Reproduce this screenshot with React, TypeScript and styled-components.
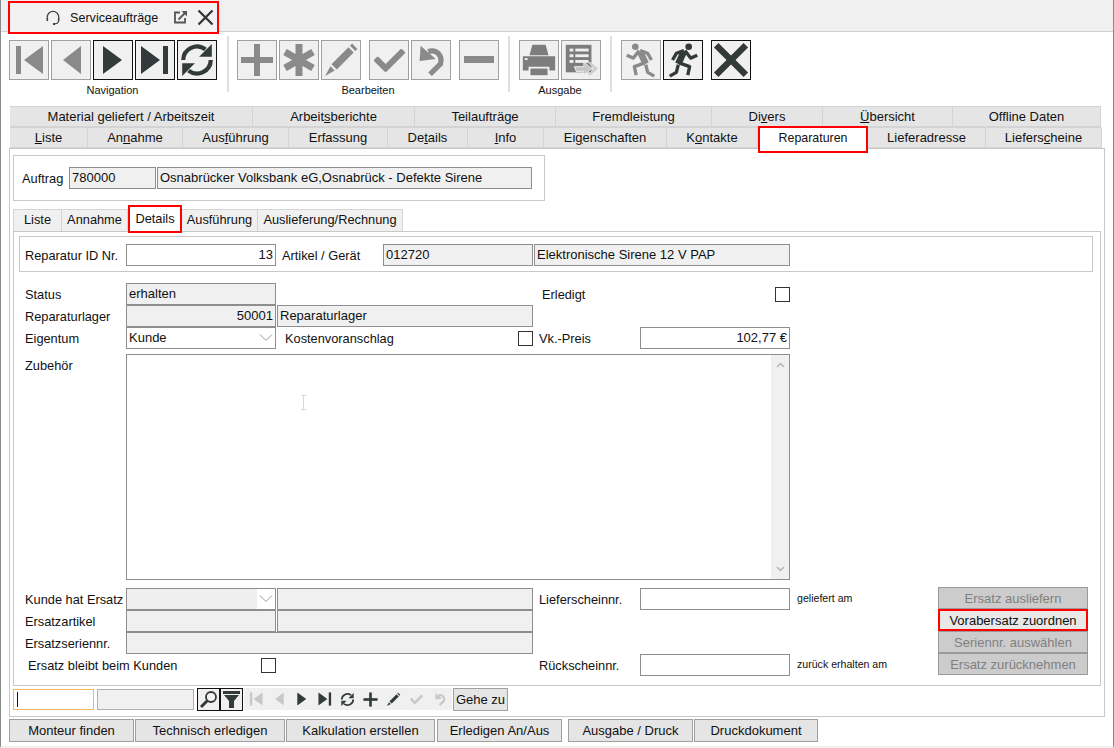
import { FC, ReactNode } from "react";
import styled, { createGlobalStyle } from "styled-components";
import { FaCheck } from "react-icons/fa";

const Global = createGlobalStyle`
  html, body { margin: 0; padding: 0; background: #fff; }
  body { font-family: "Liberation Sans", Arial, sans-serif; font-size: 13px; color: #111; }
  * { box-sizing: border-box; }
`;

const Page = styled.div`
  width: 1114px;
  height: 748px;
  overflow: hidden;
  background: #fff;
  display: flex;
  flex-direction: column;
  border-left: 1px solid #8a8a8a;
  border-right: 1px solid #8a8a8a;
  border-bottom: 2px solid #f0f0f0;
`;

const TitleBar = styled.div`
  height: 32px;
  flex: none;
  margin: 0 -1px;
  background: #f0f0f0;
  border-bottom: 1px solid #cfcfcf;
  padding: 1px 0 0 8px;
`;

const TitleTab = styled.div`
  width: 211px;
  height: 33px;
  border: 2px solid #f00;
  background: #f2f2f2;
  display: flex;
  align-items: center;
  padding-left: 35px;
  position: relative;
  z-index: 2;
`;

const TitleText = styled.span`
  margin-left: 9px;
  width: 103px;
  flex: none;
  font-size: 12.6px;
  white-space: nowrap;
`;

const TitleAction = styled.span`
  display: inline-flex;
  flex: none;
  margin-right: 9px;
  color: #333;
  &:last-child { margin-right: 0; }
`;

const Toolbar = styled.div`
  display: flex;
  height: 74px;
  flex: none;
  padding: 4px 0 0 8px;
`;

const ToolGroup = styled.div<{ $width: number; $pad?: number }>`
  width: ${p => p.$width}px;
  height: 56px;
  display: flex;
  flex-direction: column;
  padding: 4px 0 0 ${p => p.$pad || 0}px;
  align-items: flex-start;
  & + & {
    border-left: 2px solid #e0e0e0;
  }
`;

const ToolRow = styled.div`
  display: flex;
  height: 40px;
`;

const ToolCaption = styled.div<{ $width: number }>`
  width: ${p => p.$width}px;
  text-align: center;
  font-size: 11px;
  line-height: 12px;
  margin-top: 4px;
  white-space: nowrap;
`;

const ToolButton = styled.button<{ $active?: boolean; $gap?: number }>`
  width: 40px;
  height: 40px;
  padding: 0;
  margin: 0 2px 0 ${p => p.$gap || 0}px;
  background: #f0f0f0;
  border: 1px solid ${p => (p.$active ? "#111" : "#a0a0a0")};
  color: ${p => (p.$active ? "#333a3a" : "#8a8a8a")};
  display: flex;
  align-items: center;
  justify-content: center;
`;

const TabRow = styled.div`
  display: flex;
  height: 21px;
  margin-left: 9px;
  flex: none;
  position: relative;
`;

const Tab = styled.div<{ $width: number; $active?: boolean }>`
  width: ${p => p.$width}px;
  flex: none;
  background: #e5e5e5;
  border: 1px solid #d4d4d4;
  border-left-width: 0;
  line-height: 19px;
  text-align: center;
  white-space: nowrap;
  ${p => p.$active && `
    background: #fff;
    border: 2px solid #f00;
    height: 27px;
    margin: -1px 0 -5px;
    position: relative;
    z-index: 3;
    font-size: 12.4px;
    line-height: 20px;
  `}
  u { text-decoration-thickness: 1px; text-underline-offset: 1px; }
`;

const MainPanel = styled.div`
  margin-left: 8px;
  width: 1096px;
  height: 569px;
  flex: none;
  border: 1px solid #c8c8c8;
  padding: 6px 3px 0 3px;
`;

const GroupBox = styled.div`
  width: 532px;
  height: 46px;
  border: 1px solid #c8c8c8;
  display: flex;
  align-items: center;
  padding-left: 8px;
`;

const Label = styled.label<{ $width?: number; $indent?: number }>`
  width: ${p => (p.$width ? `${p.$width}px` : "auto")};
  margin-left: ${p => p.$indent || 0}px;
  padding-top: 1px;
  flex: none;
  font-size: 12.8px;
  white-space: nowrap;
`;

const Field = styled.div<{ $width: number; $disabled?: boolean; $right?: boolean }>`
  width: ${p => p.$width}px;
  height: 22px;
  flex: none;
  border: 1px solid #8e8e8e;
  background: ${p => (p.$disabled ? "#f0f0f0" : "#fff")};
  line-height: 19px;
  padding: 0 2px;
  text-align: ${p => (p.$right ? "right" : "left")};
  white-space: nowrap;
  overflow: hidden;
`;

const SubTabs = styled.div`
  display: flex;
  height: 22px;
  margin-top: 8px;
  position: relative;
`;

const SubTab = styled.div<{ $width: number; $active?: boolean }>`
  width: ${p => p.$width}px;
  flex: none;
  background: #f0f0f0;
  border: 1px solid #d4d4d4;
  border-left-width: 0;
  border-bottom: none;
  font-size: 12.8px;
  line-height: 20px;
  text-align: center;
  white-space: nowrap;
  &:first-child { border-left-width: 1px; }
  ${p => p.$active && `
    background: #fff;
    border: 2px solid #f00;
    height: 28px;
    margin: -4px 0 -2px;
    line-height: 24px;
    position: relative;
    z-index: 2;
  `}
`;

const SubPanel = styled.div`
  height: 455px;
  width: 1088px;
  border: 1px solid #c8c8c8;
  padding: 4px 7px 0 5px;
`;

const IdBox = styled.div`
  height: 36px;
  border: 1px solid #c8c8c8;
  display: flex;
  align-items: center;
  padding-left: 5px;
  padding-top: 1px;
`;

const Row = styled.div<{ $top?: number }>`
  display: flex;
  align-items: center;
  height: 22px;
  margin-top: ${p => p.$top || 0}px;
  padding-left: 6px;
`;

const Gap = styled.div<{ $width: number }>`
  width: ${p => p.$width}px;
  flex: none;
`;

const Check = styled.span`
  width: 15px;
  height: 15px;
  flex: none;
  border: 1px solid #333;
  background: #fff;
`;

const Select = styled(Field)`
  position: relative;
`;

const Chevron = styled.svg`
  position: absolute;
  right: 2px;
  top: 5px;
`;

const SelectFace = styled.span<{ $width: number }>`
  position: absolute;
  left: 0;
  top: 0;
  height: 20px;
  width: ${p => p.$width}px;
  background: #efefef;
`;

const TextArea = styled.div`
  width: 664px;
  height: 226px;
  flex: none;
  border: 1px solid #8e8e8e;
  background: #fff;
  position: relative;
`;

const ScrollBar = styled.div`
  position: absolute;
  right: 0;
  top: 0;
  bottom: 0;
  width: 18px;
  background: #f0f0f0;
  display: flex;
  flex-direction: column;
  justify-content: space-between;
  align-items: center;
  padding: 7px 0;
`;

const MouseCursor = styled.svg`
  position: absolute;
  left: 173px;
  top: 40px;
`;

const ZubehoerRow = styled.div`
  display: flex;
  margin-top: 5px;
  padding-left: 6px;
`;

const ZubehoerLabel = styled.label`
  width: 101px;
  padding-top: 4px;
  font-size: 12.8px;
  flex: none;
`;

const LowerArea = styled.div`
  display: flex;
  margin-top: 8px;
`;

const LowerFields = styled.div`
  width: 919px;
  flex: none;
`;

const Note = styled.span`
  font-size: 10.6px;
  margin-left: 7px;
  margin-top: -3px;
  white-space: nowrap;
`;

const ActionStack = styled.div`
  display: flex;
  flex-direction: column;
  margin-top: -1px;
`;

const ActionButton = styled.button<{ $highlight?: boolean }>`
  width: 150px;
  height: 22px;
  padding: 0;
  font-family: inherit;
  font-size: 13px;
  background: ${p => (p.$highlight ? "#e8e8e8" : "#cccccc")};
  border: ${p => (p.$highlight ? "2px solid #f00" : "1px solid #9a9a9a")};
  color: ${p => (p.$highlight ? "#111" : "#808080")};
`;

const SearchBar = styled.div`
  display: flex;
  align-items: center;
  height: 24px;
  margin-top: 1px;
`;

const SearchInput = styled.div<{ $focus?: boolean; $width: number }>`
  width: ${p => p.$width}px;
  height: 21px;
  flex: none;
  margin-right: 3px;
  background: ${p => (p.$focus ? "#fff" : "#f0f0f0")};
  border: 1px solid ${p => (p.$focus ? "#f5b85a" : "#b0b0b0")};
  padding: 2px 0 0 3px;
`;

const Caret = styled.div`
  width: 1px;
  height: 15px;
  background: #111;
`;

const SearchButton = styled.button`
  width: 23px;
  height: 23px;
  padding: 0;
  background: #f0f0f0;
  border: 1px solid #111;
  color: #333a3a;
  display: flex;
  align-items: center;
  justify-content: center;
`;

const MiniNav = styled.div`
  display: flex;
  align-items: center;
  width: 208px;
  height: 22px;
  margin-left: 1px;
  background: #f0f0f0;
`;

const MiniIcon = styled.span<{ $on?: boolean }>`
  width: 23px;
  display: flex;
  justify-content: center;
  color: ${p => (p.$on ? "#333a3a" : "#c8c8c8")};
`;

const GoButton = styled.button`
  width: 55px;
  height: 23px;
  padding: 0;
  margin-left: 1px;
  font-family: inherit;
  font-size: 13px;
  background: #e5e5e5;
  border: 1px solid #a0a0a0;
  color: #111;
`;

const BottomBar = styled.div`
  display: flex;
  margin: 2px 0 0 8px;
`;

const BottomButton = styled.button<{ $width: number; $gap?: number }>`
  width: ${p => p.$width}px;
  height: 23px;
  padding: 0;
  margin-left: ${p => p.$gap ?? 1}px;
  font-family: inherit;
  font-size: 13px;
  background: #e5e5e5;
  border: 1px solid #a0a0a0;
  color: #111;
  &:first-child { margin-left: 0; }
`;

const Headset: FC = () => (
  <svg width="16" height="16" viewBox="0 0 16 16" fill="none" stroke="#444" strokeWidth="1.2">
    <path d="M2.300 9V7a5.700 5.700 0 0 1 11.400 0v2" />
    <rect x="1.500" y="8" width="1.600" height="3" fill="#444" stroke="none" />
    <rect x="12.900" y="8" width="1.600" height="3" fill="#444" stroke="none" />
    <path d="M13.500 11c0 1.600-1.400 2.600-3.500 2.800" />
    <path d="M8 14h2" strokeWidth="2" />
  </svg>
);

const ExternalIcon: FC = () => (
  <svg width="15" height="15" viewBox="0 0 15 15" fill="none" stroke="#555" strokeWidth="1.8">
    <path d="M7 2.500H2v10h10V8" />
    <path d="M5.500 9.500 12 3" />
    <polygon points="8.500,1 14,1 14,6.500" fill="#555" stroke="none" />
  </svg>
);

const CrossIcon: FC<{ size: number; weight: number }> = ({ size, weight }) => (
  <svg width={size} height={size} viewBox="0 0 34 34" fill="none" stroke="currentColor" strokeWidth={weight}>
    <path d="M3 3 31 31M31 3 3 31" />
  </svg>
);

const NavIcon: FC<{ kind: "first" | "prev" | "next" | "last"; size?: number }> = ({ kind, size = 34 }) => (
  <svg width={size} height={size} viewBox="0 0 34 34" fill="currentColor">
    {kind === "first" && <><rect x="4" y="3" width="5" height="28" /><polygon points="31,3 31,31 12,17" /></>}
    {kind === "prev" && <polygon points="27,3 27,31 9,17" />}
    {kind === "next" && <polygon points="7,3 7,31 26,17" />}
    {kind === "last" && <><polygon points="3,3 3,31 22,17" /><rect x="25" y="3" width="5" height="28" /></>}
  </svg>
);

const RefreshIcon: FC<{ size?: number }> = ({ size = 36 }) => (
  <svg width={size} height={size} viewBox="0 0 34 34" fill="none" stroke="currentColor" strokeWidth="4">
    <path d="M4 17A13 13 0 0 1 25 7" />
    <path d="M30 17A13 13 0 0 1 9 27" />
    <polygon points="31,2 31,14 19,14" fill="currentColor" stroke="none" />
    <polygon points="3,32 3,20 15,20" fill="currentColor" stroke="none" />
  </svg>
);

const PlusIcon: FC<{ size?: number }> = ({ size = 34 }) => (
  <svg width={size} height={size} viewBox="0 0 34 34" fill="currentColor">
    <rect x="14" y="1" width="6" height="32" />
    <rect x="1" y="14" width="32" height="6" />
  </svg>
);

const MinusIcon: FC = () => (
  <svg width="34" height="34" viewBox="0 0 34 34" fill="currentColor">
    <rect x="2" y="13" width="30" height="7" />
  </svg>
);

const StarIcon: FC = () => (
  <svg width="34" height="34" viewBox="0 0 34 34" fill="none" stroke="currentColor" strokeWidth="7">
    <path d="M17 1V33M3 9 31 25M31 9 3 25" />
  </svg>
);

const PencilIcon: FC<{ size?: number }> = ({ size = 36 }) => (
  <svg width={size} height={size} viewBox="0 0 34 34" fill="currentColor">
    <polygon points="8,21 24,5 29,10 13,26" />
    <polygon points="25.500,3.500 27.500,1.500 32.500,6.500 30.500,8.500" />
    <polygon points="7,23 11,27 2,32" />
  </svg>
);

const UndoIcon: FC<{ size?: number }> = ({ size = 38 }) => (
  <svg width={size} height={size} viewBox="0 0 40 40" fill="none" stroke="currentColor">
    <path d="M17 11C27 8 32 16 30 24L19 35" strokeWidth="5.500" />
    <polygon points="9,5 25,19 8,21" fill="currentColor" stroke="none" />
  </svg>
);

const PrinterIcon: FC = () => (
  <svg width="38" height="38" viewBox="0 0 40 40" fill="#7d7d7d">
    <polygon points="13,4 27,4 30,15 10,15" />
    <path d="M3 16H37V31H31V27H9V31H3Z" />
    <rect x="5" y="18" width="3" height="2" fill="#f0f0f0" />
    <rect x="11" y="29" width="18" height="7" />
  </svg>
);

const ListSendIcon: FC = () => (
  <svg width="38" height="38" viewBox="0 0 40 40">
    <rect x="4" y="4" width="27" height="29" fill="#7d7d7d" />
    <g fill="#f0f0f0">
      <rect x="8" y="8" width="4" height="3" /><rect x="14" y="8" width="14" height="3" />
      <rect x="8" y="14" width="4" height="3" /><rect x="14" y="14" width="14" height="3" />
      <rect x="8" y="20" width="4" height="3" /><rect x="14" y="20" width="14" height="3" />
    </g>
    <polygon points="13,27 23,27 23,22 31,29 23,36 23,32 15,32" fill="#c4c4c4" stroke="#f0f0f0" />
    <polygon points="27,22 30,22 38,29 30,36 27,36 33,29" fill="#cfcfcf" />
  </svg>
);

const RunnerIcon: FC<{ flip?: boolean }> = ({ flip }) => (
  <svg width="38" height="38" viewBox="0 0 40 40" fill="none" stroke="currentColor" strokeWidth="3.500" strokeLinejoin="round">
    <g transform={flip ? "translate(40 0) scale(-1 1)" : undefined}>
      <circle cx="26" cy="6" r="3.500" fill="currentColor" stroke="none" />
      <path d="M21 11 15 24" strokeWidth="7" />
      <path d="M22 10 28 18 35 15" />
      <path d="M21 10 13 13 9 20" />
      <path d="M16 23 27 27 25 36" />
      <path d="M15 25 13 33 6 37" />
    </g>
  </svg>
);

const SearchGlass: FC = () => (
  <svg width="19" height="19" viewBox="0 0 19 19" fill="none" stroke="currentColor">
    <circle cx="12" cy="7" r="5" strokeWidth="1.800" />
    <path d="M8.500 10.500 2 17" strokeWidth="3" />
  </svg>
);

const FunnelIcon: FC = () => (
  <svg width="19" height="19" viewBox="0 0 19 19" fill="currentColor">
    <rect x="1" y="1" width="17" height="3" />
    <polygon points="2,5 17,5 12,11 12,18 7,18 7,11" />
  </svg>
);

const Chev: FC = () => (
  <Chevron width="14" height="9" viewBox="0 0 14 9" fill="none" stroke="#9a9a9a">
    <path d="M1 1.500 7 7.500 13 1.500" />
  </Chevron>
);

const ScrollArrow: FC<{ down?: boolean }> = ({ down }) => (
  <svg width="9" height="6" viewBox="0 0 9 6" fill="none" stroke="#b5b5b5" strokeWidth="1.500">
    <path d={down ? "M1 1 4.500 4.500 8 1" : "M1 5 4.500 1.500 8 5"} />
  </svg>
);

const topTabs: Array<{ label: ReactNode; width: number }> = [
  { label: "Material geliefert / Arbeitszeit", width: 243 },
  { label: <>Arbeit<u>s</u>berichte</>, width: 162 },
  { label: "Teilaufträge", width: 141 },
  { label: "Fremdleistung", width: 156 },
  { label: <>Di<u>v</u>ers</>, width: 111 },
  { label: <><u>Ü</u>bersicht</>, width: 130 },
  { label: "Offline Daten", width: 148 },
];

const mainTabs: Array<{ label: ReactNode; width: number; active?: boolean }> = [
  { label: <><u>L</u>iste</>, width: 78 },
  { label: <>An<u>n</u>ahme</>, width: 95 },
  { label: <>Aus<u>f</u>ührung</>, width: 106 },
  { label: "Erfassung", width: 99 },
  { label: <>De<u>t</u>ails</>, width: 80 },
  { label: <><u>I</u>nfo</>, width: 76 },
  { label: <>Ei<u>g</u>enschaften</>, width: 123 },
  { label: <>K<u>o</u>ntakte</>, width: 91 },
  { label: "Reparaturen", width: 110, active: true },
  { label: "Lieferadresse", width: 118 },
  { label: <>Liefers<u>c</u>heine</>, width: 116 },
];

const subTabs = [
  { label: "Liste", width: 49 },
  { label: "Annahme", width: 66 },
  { label: "Details", width: 54, active: true },
  { label: "Ausführung", width: 76 },
  { label: "Auslieferung/Rechnung", width: 145 },
];

const bottomButtons = [
  { label: "Monteur finden", width: 125 },
  { label: "Technisch erledigen", width: 150 },
  { label: "Kalkulation erstellen", width: 149 },
  { label: "Erledigen An/Aus", width: 125, gap: 2 },
  { label: "Ausgabe / Druck", width: 125, gap: 6 },
  { label: "Druckdokument", width: 124 },
];

export default function App() {
  return (
    <Page>
      <Global />
      <TitleBar>
        <TitleTab>
          <Headset />
          <TitleText>Serviceaufträge</TitleText>
          <TitleAction><ExternalIcon /></TitleAction>
          <TitleAction><CrossIcon size={17} weight={4.500} /></TitleAction>
        </TitleTab>
      </TitleBar>

      <Toolbar>
        <ToolGroup $width={218}>
          <ToolRow>
            <ToolButton><NavIcon kind="first" /></ToolButton>
            <ToolButton><NavIcon kind="prev" /></ToolButton>
            <ToolButton $active><NavIcon kind="next" /></ToolButton>
            <ToolButton $active><NavIcon kind="last" /></ToolButton>
            <ToolButton $active><RefreshIcon /></ToolButton>
          </ToolRow>
          <ToolCaption $width={207}>Navigation</ToolCaption>
        </ToolGroup>
        <ToolGroup $width={281} $pad={8}>
          <ToolRow>
            <ToolButton><PlusIcon /></ToolButton>
            <ToolButton><StarIcon /></ToolButton>
            <ToolButton><PencilIcon /></ToolButton>
            <ToolButton $gap={6}><FaCheck size={31} /></ToolButton>
            <ToolButton><UndoIcon /></ToolButton>
            <ToolButton $gap={6}><MinusIcon /></ToolButton>
          </ToolRow>
          <ToolCaption $width={262}>Bearbeiten</ToolCaption>
        </ToolGroup>
        <ToolGroup $width={102} $pad={9}>
          <ToolRow>
            <ToolButton><PrinterIcon /></ToolButton>
            <ToolButton><ListSendIcon /></ToolButton>
          </ToolRow>
          <ToolCaption $width={82}>Ausgabe</ToolCaption>
        </ToolGroup>
        <ToolGroup $width={150} $pad={9}>
          <ToolRow>
            <ToolButton><RunnerIcon flip /></ToolButton>
            <ToolButton $active><RunnerIcon /></ToolButton>
            <ToolButton $active $gap={6}><CrossIcon size={36} weight={6} /></ToolButton>
          </ToolRow>
        </ToolGroup>
      </Toolbar>

      <TabRow>
        {topTabs.map((t, i) => <Tab key={i} $width={t.width}>{t.label}</Tab>)}
      </TabRow>
      <TabRow>
        {mainTabs.map((t, i) => <Tab key={i} $width={t.width} $active={t.active}>{t.label}</Tab>)}
      </TabRow>

      <MainPanel>
        <GroupBox>
          <Label $width={47}>Auftrag</Label>
          <Field $width={87} $disabled>780000</Field>
          <Gap $width={1} />
          <Field $width={375} $disabled>Osnabrücker Volksbank eG,Osnabrück - Defekte Sirene</Field>
        </GroupBox>

        <SubTabs>
          {subTabs.map(t => <SubTab key={t.label} $width={t.width} $active={t.active}>{t.label}</SubTab>)}
        </SubTabs>
        <SubPanel>
          <IdBox>
            <Label $width={101}>Reparatur ID Nr.</Label>
            <Field $width={150} $right>13</Field>
            <Label $width={101} $indent={6}>Artikel / Gerät</Label>
            <Field $width={150} $disabled>012720</Field>
            <Gap $width={1} />
            <Field $width={256} $disabled>Elektronische Sirene 12 V PAP</Field>
          </IdBox>

          <Row $top={11}>
            <Label $width={101}>Status</Label>
            <Field $width={150} $disabled>erhalten</Field>
            <Label $width={233} $indent={266}>Erledigt</Label>
            <Check />
          </Row>
          <Row>
            <Label $width={101}>Reparaturlager</Label>
            <Field $width={150} $disabled $right>50001</Field>
            <Gap $width={1} />
            <Field $width={256} $disabled>Reparaturlager</Field>
          </Row>
          <Row>
            <Label $width={101}>Eigentum</Label>
            <Select $width={150}>Kunde<Chev /></Select>
            <Label $width={233} $indent={9}>Kostenvoranschlag</Label>
            <Check />
            <Label $width={101} $indent={6}>Vk.-Preis</Label>
            <Field $width={150} $right>102,77 €</Field>
          </Row>

          <ZubehoerRow>
            <ZubehoerLabel>Zubehör</ZubehoerLabel>
            <TextArea>
              <MouseCursor width="7" height="15" viewBox="0 0 7 15" fill="none" stroke="#d8d8d8">
                <path d="M1 .5h5M3.500 .5v14M1 14.500h5" />
              </MouseCursor>
              <ScrollBar><ScrollArrow /><ScrollArrow down /></ScrollBar>
            </TextArea>
          </ZubehoerRow>

          <LowerArea>
            <LowerFields>
              <Row>
                <Label $width={101}>Kunde hat Ersatz</Label>
                <Select $width={150}><SelectFace $width={130} /><Chev /></Select>
                <Gap $width={1} />
                <Field $width={256} $disabled />
                <Label $width={101} $indent={6}>Lieferscheinnr.</Label>
                <Field $width={150} />
                <Note>geliefert am</Note>
              </Row>
              <Row>
                <Label $width={101}>Ersatzartikel</Label>
                <Field $width={150} $disabled />
                <Gap $width={1} />
                <Field $width={256} $disabled />
              </Row>
              <Row>
                <Label $width={101}>Ersatzseriennr.</Label>
                <Field $width={407} $disabled />
              </Row>
              <Row>
                <Label $width={233} $indent={3}>Ersatz bleibt beim Kunden</Label>
                <Check />
                <Label $width={101} $indent={263}>Rückscheinnr.</Label>
                <Field $width={150} />
                <Note>zurück erhalten am</Note>
              </Row>
            </LowerFields>
            <ActionStack>
              <ActionButton>Ersatz ausliefern</ActionButton>
              <ActionButton $highlight>Vorabersatz zuordnen</ActionButton>
              <ActionButton>Seriennr. auswählen</ActionButton>
              <ActionButton>Ersatz zurücknehmen</ActionButton>
            </ActionStack>
          </LowerArea>
        </SubPanel>

        <SearchBar>
          <SearchInput $focus $width={81}><Caret /></SearchInput>
          <SearchInput $width={97} />
          <SearchButton><SearchGlass /></SearchButton>
          <SearchButton><FunnelIcon /></SearchButton>
          <MiniNav>
            <MiniIcon><NavIcon kind="first" size={16} /></MiniIcon>
            <MiniIcon><NavIcon kind="prev" size={16} /></MiniIcon>
            <MiniIcon $on><NavIcon kind="next" size={16} /></MiniIcon>
            <MiniIcon $on><NavIcon kind="last" size={16} /></MiniIcon>
            <MiniIcon $on><RefreshIcon size={15} /></MiniIcon>
            <MiniIcon $on><PlusIcon size={15} /></MiniIcon>
            <MiniIcon $on><PencilIcon size={15} /></MiniIcon>
            <MiniIcon><FaCheck size={13} /></MiniIcon>
            <MiniIcon><UndoIcon size={16} /></MiniIcon>
          </MiniNav>
          <GoButton>Gehe zu</GoButton>
        </SearchBar>
      </MainPanel>

      <BottomBar>
        {bottomButtons.map(b => <BottomButton key={b.label} $width={b.width} $gap={b.gap}>{b.label}</BottomButton>)}
      </BottomBar>
    </Page>
  );
}
